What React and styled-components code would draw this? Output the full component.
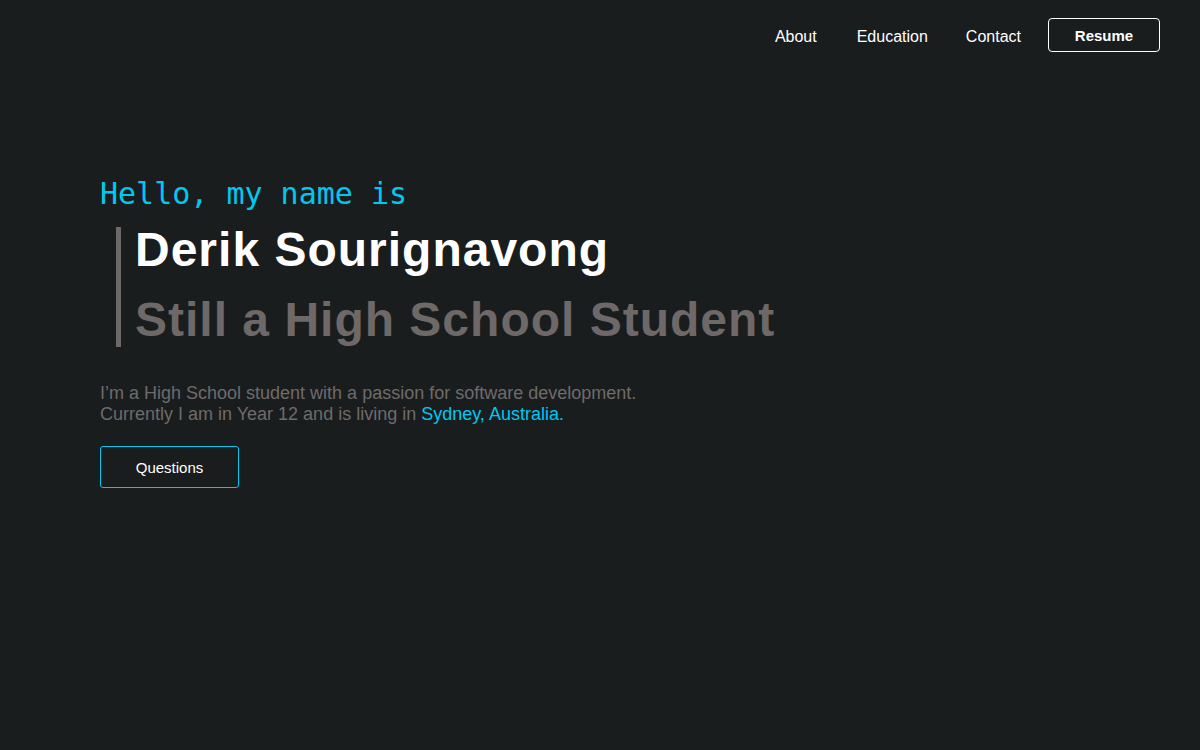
import React from 'react'
import styled, { createGlobalStyle } from 'styled-components'

const GlobalStyle = createGlobalStyle`
  html, body {
    margin: 0;
    padding: 0;
    background: #1a1d1e;
    font-family: 'Liberation Sans', Arial, sans-serif;
  }
`

const Page = styled.div`
  min-height: 750px;
  background: #1a1d1e;
  color: #ffffff;
`

const Nav = styled.nav`
  display: flex;
  justify-content: flex-end;
  align-items: center;
  padding: 18px 40px 0 0;
`

const NavLink = styled.a`
  color: #ffffff;
  font-size: 16px;
  text-decoration: none;
  padding-top: 3px;
  margin-right: ${({ $gap }) => $gap}px;
`

const ResumeButton = styled.a`
  display: flex;
  align-items: center;
  justify-content: center;
  width: 110px;
  height: 32px;
  border: 1px solid #ffffff;
  border-radius: 4px;
  color: #ffffff;
  font-size: 15px;
  font-weight: 700;
  text-decoration: none;
`

const Hero = styled.section`
  padding: 124px 0 0 100px;
`

const Greeting = styled.p`
  margin: 0;
  font-family: 'DejaVu Sans Mono', monospace;
  font-size: 30px;
  color: #00c8f0;
  line-height: 36px;
`

const TitleBlock = styled.div`
  margin: 15px 0 0 16px;
  padding: 0 0 4px 14px;
  border-left: 5px solid #6e6969;
`

const Title = styled.h1`
  margin: 0;
  font-size: 48px;
  font-weight: 700;
  letter-spacing: 1px;
  line-height: 46px;
  color: ${({ $muted }) => ($muted ? '#6e6868' : '#ffffff')};
  margin-bottom: ${({ $muted }) => ($muted ? 0 : 24)}px;
`

const Intro = styled.p`
  margin: 36px 0 0;
  font-size: 18px;
  line-height: 21px;
  color: #6e6b6b;
`

const Highlight = styled.span`
  color: #00c8f0;
`

const QuestionsButton = styled.a`
  display: flex;
  align-items: center;
  justify-content: center;
  margin-top: 21px;
  width: 137px;
  height: 40px;
  border: 1px solid #00c8f0;
  border-radius: 3px;
  color: #ffffff;
  font-size: 15px;
  text-decoration: none;
`

export default function App() {
  return (
    <Page>
      <GlobalStyle />
      <Nav>
        <NavLink $gap={40}>About</NavLink>
        <NavLink $gap={38}>Education</NavLink>
        <NavLink $gap={27}>Contact</NavLink>
        <ResumeButton>Resume</ResumeButton>
      </Nav>
      <Hero>
        <Greeting>Hello, my name is</Greeting>
        <TitleBlock>
          <Title>Derik Sourignavong</Title>
          <Title $muted>Still a High School Student</Title>
        </TitleBlock>
        <Intro>
          I’m a High School student with a passion for software development.
          <br />
          Currently I am in Year 12 and is living in <Highlight>Sydney, Australia.</Highlight>
        </Intro>
        <QuestionsButton>Questions</QuestionsButton>
      </Hero>
    </Page>
  )
}
